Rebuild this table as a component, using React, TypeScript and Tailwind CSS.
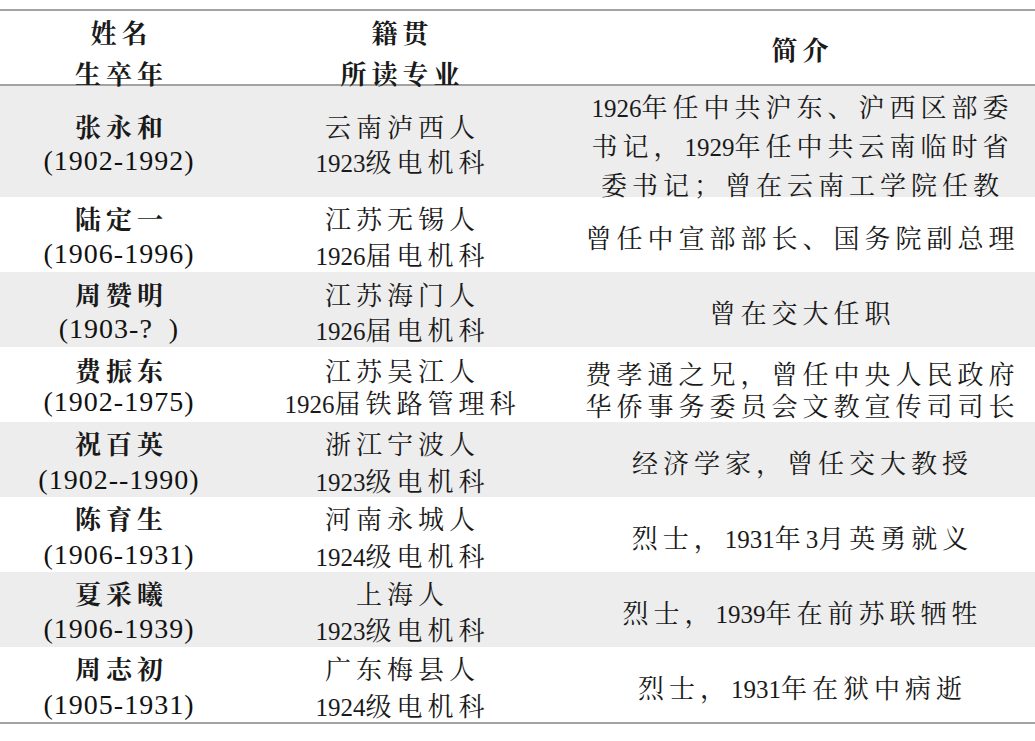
import React from "react";

const CJK_SPLIT = /([\u3000-\u303f\u4e00-\u9fff\uff00-\uffef]+)/;
const CJK_TEST = /^[\u3000-\u303f\u4e00-\u9fff\uff00-\uffef]+$/;

function T({ s }: { s: string }) {
  const parts = s.split(CJK_SPLIT).filter((p) => p.length > 0);
  return (
    <>
      {parts.map((p, i) => {
        const isCJK = CJK_TEST.test(p);
        const last = i === parts.length - 1;
        if (isCJK) {
          return (
            <span key={i} className={last ? "tracking-[5px] mr-[-5px]" : "tracking-[5px]"}>
              {p}
            </span>
          );
        }
        return (
          <span key={i} className="font-['Liberation_Serif',serif] text-[25px] leading-none">
            {p}
          </span>
        );
      })}
    </>
  );
}

const LINE = "whitespace-nowrap font-['Noto_Serif_CJK_SC','Noto_Sans_CJK_SC',serif] text-[26px]";
const YEAR = "whitespace-nowrap font-['Liberation_Serif',serif] text-[28px] tracking-[1px] text-[#111]";

type Row = {
  name: string;
  years: string;
  origin: string;
  major: string;
  intro: string[];
  h: string;
  left: string;
  right: string;
};

const DEF_RIGHT = "pt-[4px] leading-[36px]";

const rows: Row[] = [
  {
    name: "张永和",
    years: "(1902-1992)",
    origin: "云南泸西人",
    major: "1923级电机科",
    intro: ["1926年任中共沪东、沪西区部委", "书记，1929年任中共云南临时省", "委书记；曾在云南工学院任教"],
    h: "h-[111px] bg-[#ededed]",
    left: "pb-[10px] leading-[35px]",
    right: "pb-[7px] leading-[39px]",
  },
  {
    name: "陆定一",
    years: "(1906-1996)",
    origin: "江苏无锡人",
    major: "1926届电机科",
    intro: ["曾任中宣部部长、国务院副总理"],
    h: "h-[75px] bg-white",
    left: "pt-[2px] leading-[36px]",
    right: DEF_RIGHT,
  },
  {
    name: "周赞明",
    years: "(1903-?\u00a0\u00a0)",
    origin: "江苏海门人",
    major: "1926届电机科",
    intro: ["曾在交大任职"],
    h: "h-[75px] bg-[#ededed]",
    left: "pt-[2px] leading-[35px]",
    right: DEF_RIGHT,
  },
  {
    name: "费振东",
    years: "(1902-1975)",
    origin: "江苏吴江人",
    major: "1926届铁路管理科",
    intro: ["费孝通之兄，曾任中央人民政府", "华侨事务委员会文教宣传司司长"],
    h: "h-[75px] bg-white",
    left: "pt-[2px] leading-[32px]",
    right: "pt-[8px] leading-[32px]",
  },
  {
    name: "祝百英",
    years: "(1902--1990)",
    origin: "浙江宁波人",
    major: "1923级电机科",
    intro: ["经济学家，曾任交大教授"],
    h: "h-[75px] bg-[#ededed]",
    left: "pt-[2px] leading-[37px]",
    right: DEF_RIGHT,
  },
  {
    name: "陈育生",
    years: "(1906-1931)",
    origin: "河南永城人",
    major: "1924级电机科",
    intro: ["烈士，1931年3月英勇就义"],
    h: "h-[75px] bg-white",
    left: "pt-[2px] leading-[37px]",
    right: DEF_RIGHT,
  },
  {
    name: "夏采曦",
    years: "(1906-1939)",
    origin: "上海人",
    major: "1923级电机科",
    intro: ["烈士，1939年在前苏联牺牲"],
    h: "h-[75px] bg-[#ededed]",
    left: "pt-[2px] leading-[36px]",
    right: DEF_RIGHT,
  },
  {
    name: "周志初",
    years: "(1905-1931)",
    origin: "广东梅县人",
    major: "1924级电机科",
    intro: ["烈士，1931年在狱中病逝"],
    h: "h-[75px] bg-white",
    left: "pt-[2px] leading-[37px]",
    right: DEF_RIGHT,
  },
];

export default function App() {
  return (
    <div className="w-[1035px] h-[741px] bg-white overflow-hidden text-[#1a1a1a]">
      <div className="mt-[9px] border-t-2 border-b-2 border-[#a3a3a3]">
        <div className="grid grid-cols-[238px_324px_1fr] h-[75px] border-b-2 border-[#a3a3a3] font-bold leading-[41px] text-center">
          <div className="flex flex-col items-center justify-center pb-[17px]">
            <div className={LINE}><T s="姓名" /></div>
            <div className={LINE}><T s="生卒年" /></div>
          </div>
          <div className="flex flex-col items-center justify-center pb-[17px]">
            <div className={LINE}><T s="籍贯" /></div>
            <div className={LINE}><T s="所读专业" /></div>
          </div>
          <div className="flex flex-col items-center justify-center pl-[3px] pb-[24px]">
            <div className={LINE}><T s="简介" /></div>
          </div>
        </div>
        {rows.map((r, idx) => (
          <div key={idx} className={r.h + " grid grid-cols-[238px_324px_1fr] text-center"}>
            <div className={r.left + " flex flex-col items-center justify-center"}>
              <div className={LINE + " font-bold"}><T s={r.name} /></div>
              <div className={YEAR}>{r.years}</div>
            </div>
            <div className={r.left + " flex flex-col items-center justify-center"}>
              <div className={LINE}><T s={r.origin} /></div>
              <div className={LINE}><T s={r.major} /></div>
            </div>
            <div className={r.right + " flex flex-col items-center justify-center pl-[3px]"}>
              {r.intro.map((line, j) => (
                <div key={j} className={LINE}>
                  <T s={line} />
                </div>
              ))}
            </div>
          </div>
        ))}
      </div>
    </div>
  );
}
